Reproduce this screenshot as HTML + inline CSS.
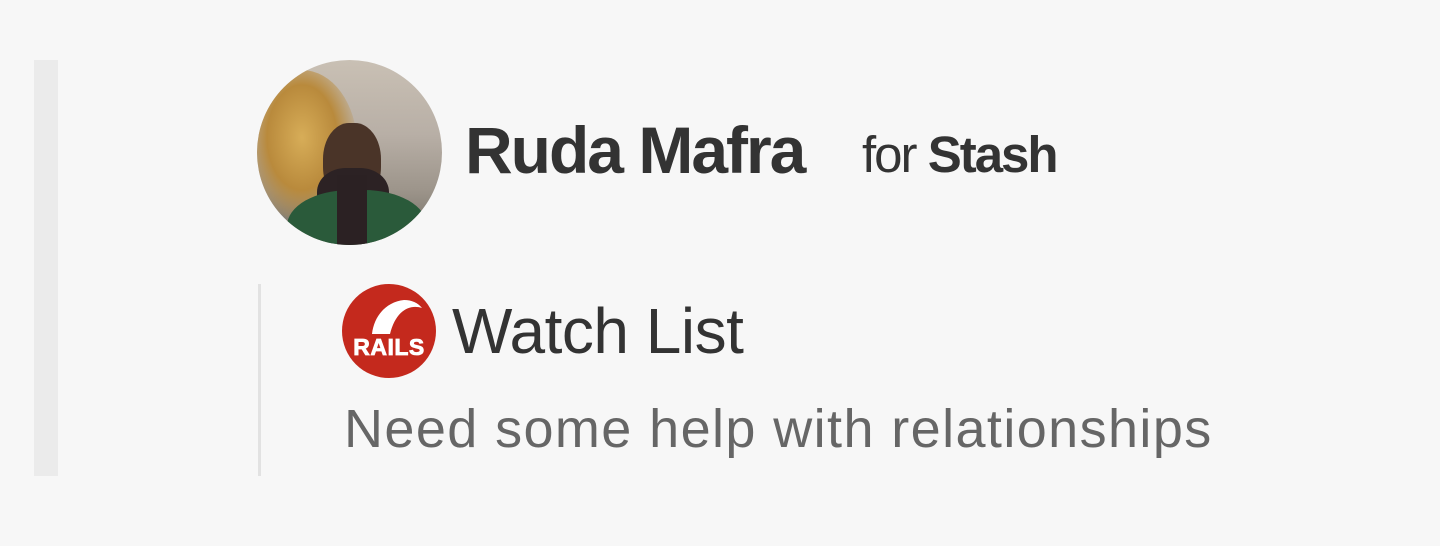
<!DOCTYPE html>
<html><head><meta charset="utf-8"><style>
html,body{margin:0;padding:0;width:1440px;height:546px;background:#f7f7f7;overflow:hidden;font-family:"Liberation Sans",sans-serif}
.a{position:absolute;line-height:1;white-space:nowrap}
</style></head><body>
<div style="position:absolute;left:34px;top:60px;width:24px;height:416px;background:#ebebeb"></div>
<div style="position:absolute;left:258px;top:284px;width:3px;height:192px;background:#e2e2e2"></div>
<div style="position:absolute;left:257px;top:60px;width:185px;height:185px;border-radius:50%;overflow:hidden;background:linear-gradient(180deg,#c9c0b4 0%,#b8afa6 40%,#9d958b 70%,#6f6a60 100%)">
  <div style="position:absolute;left:-10px;top:10px;width:110px;height:150px;border-radius:50%;background:radial-gradient(ellipse at 50% 45%,#d7ad58 0%,#b98a3c 45%,rgba(140,110,60,0) 75%)"></div>
  <div style="position:absolute;left:66px;top:63px;width:58px;height:80px;border-radius:45%;background:#4a3428"></div>
  <div style="position:absolute;left:60px;top:108px;width:72px;height:60px;border-radius:40%;background:#2c2224"></div>
  <div style="position:absolute;left:30px;top:130px;width:140px;height:80px;border-radius:45% 45% 0 0;background:#2a5a3a"></div>
  <div style="position:absolute;left:80px;top:115px;width:30px;height:70px;background:#2b2123"></div>
</div>
<span class="a" style="left:465px;top:117px;font-size:66px;font-weight:bold;color:#333;letter-spacing:-2px">Ruda Mafra</span>
<span class="a" style="left:862px;top:129px;font-size:51px;color:#333;letter-spacing:-2px">for <b>Stash</b></span>
<svg style="position:absolute;left:342px;top:284px" width="94" height="94" viewBox="0 0 94 94">
  <circle cx="47" cy="47" r="47" fill="#c4291d"/>
  <path d="M30 50 C32 32 44 18 62 16 C70 16 76 19 80 24 C68 20 54 26 48 50 Z" fill="#fff"/>
  <rect x="8" y="50" width="78" height="22" fill="#c4291d"/>
  <text x="47" y="71" text-anchor="middle" font-family="Liberation Sans" font-weight="bold" font-size="23" fill="#fff" stroke="#fff" stroke-width="0.8" letter-spacing="0.5">RAILS</text>
</svg>
<span class="a" style="left:452px;top:299px;font-size:64px;color:#333;letter-spacing:-0.5px">Watch List</span>
<span class="a" style="left:344px;top:402px;font-size:54px;color:#666;letter-spacing:1.4px">Need some help with relationships</span>
</body></html>
